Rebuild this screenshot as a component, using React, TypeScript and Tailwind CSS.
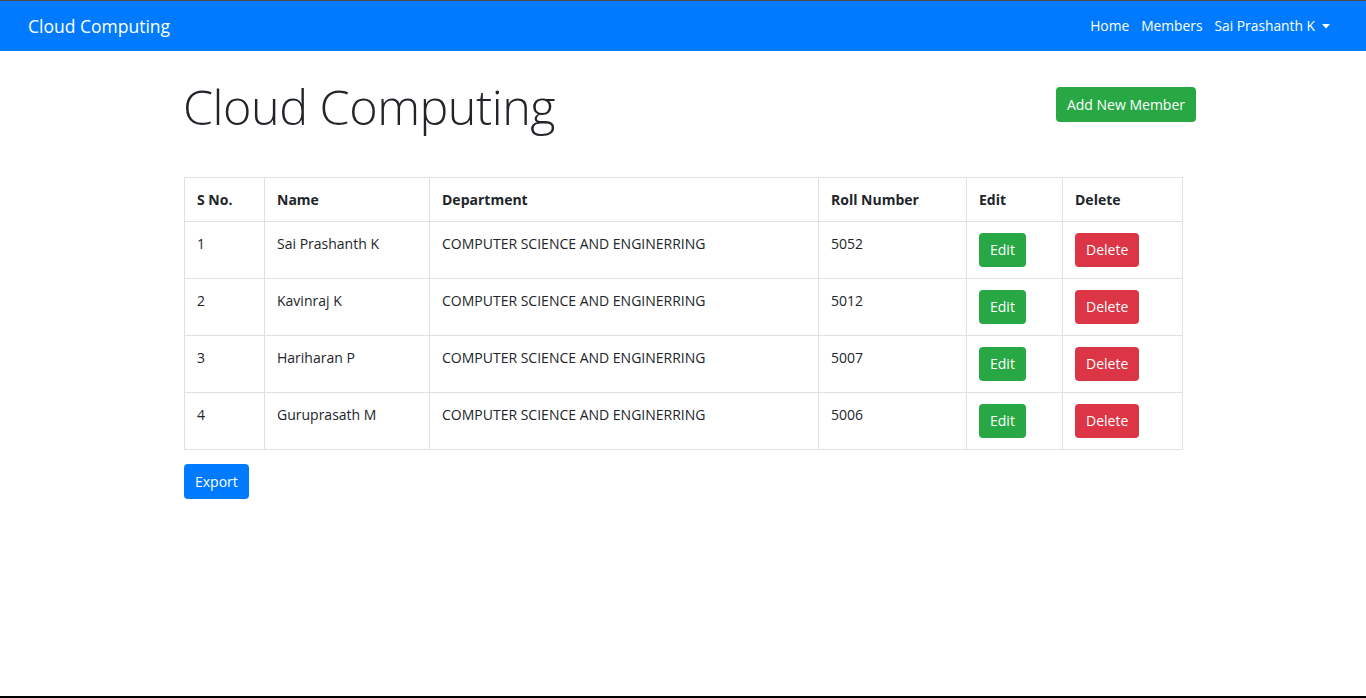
const members = [
  { id: 1, name: "Sai Prashanth K", dept: "COMPUTER SCIENCE AND ENGINERRING", roll: "5052" },
  { id: 2, name: "Kavinraj K", dept: "COMPUTER SCIENCE AND ENGINERRING", roll: "5012" },
  { id: 3, name: "Hariharan P", dept: "COMPUTER SCIENCE AND ENGINERRING", roll: "5007" },
  { id: 4, name: "Guruprasath M", dept: "COMPUTER SCIENCE AND ENGINERRING", roll: "5006" },
]

const cell = "border border-[#dee2e6] px-3 align-top text-left"

export default function App() {
  return (
    <div
      className="flex min-h-screen flex-col border-b-2 border-black bg-white text-[#212529]"
      style={{ fontFamily: '"Open Sans", "Noto Sans", sans-serif' }}
    >
      {/* Navbar */}
      <nav className="flex h-[51px] items-center justify-between border-t border-[#4a4a4a] bg-[#007bff] pl-[28px] pr-[36px]">
        <a href="#" className="text-[17.5px] text-white">
          Cloud Computing
        </a>
        <ul className="flex items-center gap-[12px] text-[13.8px] text-white">
          <li>
            <a href="#">Home</a>
          </li>
          <li>
            <a href="#">Members</a>
          </li>
          <li className="flex items-center gap-[7px]">
            <a href="#">Sai Prashanth K</a>
            <svg width="8" height="5" viewBox="0 0 8 5" className="mt-[1px]">
              <path d="M0 0h8L4 4.5z" fill="currentColor" />
            </svg>
          </li>
        </ul>
      </nav>

      <main className="ml-[184px] w-[1012px] flex-1 text-[14px]">
        {/* Header */}
        <div className="flex items-center justify-between pt-[25px]">
          <h1 className="ml-[-1px] text-[48.5px] leading-[1.25] font-light tracking-[-0.5px]">Cloud Computing</h1>
          <button className="mt-[-4px] h-[35px] rounded-[4px] bg-[#28a745] px-[11px] text-[14px] text-white">
            Add New Member
          </button>
        </div>

        {/* Members table */}
        <table className="mt-[40px] w-[998px] table-fixed border-collapse">
          <colgroup>
            <col className="w-[80px]" />
            <col className="w-[165px]" />
            <col className="w-[389px]" />
            <col className="w-[148px]" />
            <col className="w-[96px]" />
            <col className="w-[120px]" />
          </colgroup>
          <thead>
            <tr className="font-bold">
              <th className={cell + " py-3 leading-[19px]"}>S No.</th>
              <th className={cell + " py-3 leading-[19px]"}>Name</th>
              <th className={cell + " py-3 leading-[19px]"}>Department</th>
              <th className={cell + " py-3 leading-[19px]"}>Roll Number</th>
              <th className={cell + " py-3 leading-[19px]"}>Edit</th>
              <th className={cell + " py-3 leading-[19px]"}>Delete</th>
            </tr>
          </thead>
          <tbody>
            {members.map((m) => (
              <tr key={m.id} className="h-[57px]">
                <td className={cell + " pt-[11px] leading-[21px]"}>{m.id}</td>
                <td className={cell + " pt-[11px] leading-[21px]"}>{m.name}</td>
                <td className={cell + " pt-[11px] leading-[21px] whitespace-nowrap"}>{m.dept}</td>
                <td className={cell + " pt-[11px] leading-[21px]"}>{m.roll}</td>
                <td className={cell + " pt-[11px] pb-[11px]"}>
                  <button className="h-[34px] rounded-[4px] bg-[#28a745] px-[11px] text-white">Edit</button>
                </td>
                <td className={cell + " pt-[11px] pb-[11px]"}>
                  <button className="h-[34px] rounded-[4px] bg-[#dc3545] px-[11px] text-white">Delete</button>
                </td>
              </tr>
            ))}
          </tbody>
        </table>

        <button className="mt-[14px] h-[35px] rounded-[4px] bg-[#007bff] px-[11px] text-white">Export</button>
      </main>
    </div>
  )
}
